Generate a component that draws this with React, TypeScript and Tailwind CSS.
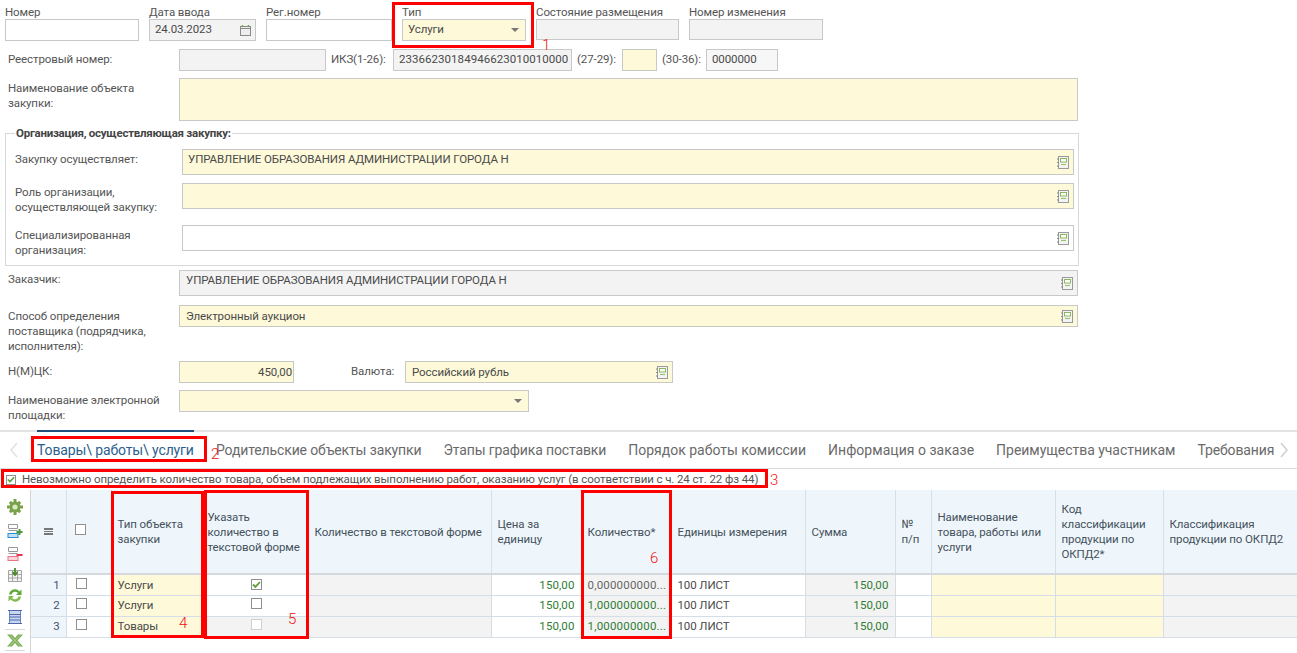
import React from 'react';

const YELLOW = 'bg-[#fdf9d9]';
const GRAY = 'bg-[#f3f3f3]';

const BookIcon = () => (
  <svg width="12" height="13" viewBox="0 0 12 13" className="shrink-0">
    <rect x="1.5" y="0.5" width="10" height="12" fill="#f4f4f4" stroke="#9a9a9a" />
    <rect x="3.5" y="2.5" width="6" height="3.5" fill="#fff" stroke="#8cb85c" />
    <path d="M4 8.5h5" stroke="#9cc46c" strokeWidth="1.2" />
    <path d="M0 3h2M0 6.5h2M0 10h2" stroke="#888" />
  </svg>
);

const Caret = () => <span className="ml-auto mr-[1px] w-0 h-0 border-x-[4px] border-x-transparent border-t-[4px] border-t-[#777]" />;

const Box = ({ className = '', children }: { className?: string; children?: React.ReactNode }) => (
  <div className={`border border-[#c8c8c8] shrink-0 flex text-[#4a4a4a] ${className}`}>{children}</div>
);

const TopField = ({ label, width, children, className = '' }: { label: string; width: string; children?: React.ReactNode; className?: string }) => (
  <div className={`shrink-0 ${width}`}>
    <div className="h-[14px] leading-[14px] text-[#555]">{label}</div>
    <Box className={`h-[22px] items-center px-[5px] ${className}`}>{children}</Box>
  </div>
);

const Label = ({ children, className = '' }: { children: React.ReactNode; className?: string }) => (
  <div className={`text-[#555] leading-[15px] shrink-0 ${className}`}>{children}</div>
);

const Check = ({ checked = false, disabled = false, small = false }: { checked?: boolean; disabled?: boolean; small?: boolean }) => (
  <span className={`inline-flex items-center justify-center border bg-white ${small ? 'w-[10px] h-[10px]' : 'w-[11px] h-[11px]'} ${disabled ? 'border-[#d0d0d0]' : 'border-[#8f8f8f]'}`}>
    {checked && (
      <svg width="9" height="9" viewBox="0 0 9 9">
        <path d="M1 4.5l2.4 2.4L8 2" fill="none" stroke="#5e9e38" strokeWidth="1.8" />
      </svg>
    )}
  </span>
);

const Red = ({ className }: { className: string }) => <div className={`absolute border-[3px] border-[#ff0000] pointer-events-none ${className}`} />;
const Num = ({ className, children }: { className: string; children: React.ReactNode }) => (
  <span className={`absolute text-[#f01010] text-[15px] leading-none font-light tracking-normal ${className}`}>{children}</span>
);

const ToolIcons = () => (
  <div className="w-[31px] shrink-0 border-r border-[#d5d5d5] flex flex-col items-center pt-[9px] h-[163px]">
    <svg width="16" height="16" viewBox="0 0 16 16" className="mb-[9px]">
      <g fill="#7aa24a">
        <circle cx="8" cy="8" r="5.5" />
        <path d="M6.5 0h3v3h-3zM6.500 13h3v3h-3zM0 6.500h3v3H0zM13 6.500h3v3h-3z" />
        <path d="M1.800 3.900l2.100-2.100 2.100 2.100-2.100 2.100zM10 12.100l2.100-2.100 2.100 2.100-2.100 2.100zM1.800 12.100L3.900 10 6 12.100l-2.100 2.100zM10 3.900l2.100-2.100 2.100 2.100L12.100 6z" />
      </g>
      <circle cx="8" cy="8" r="2.600" fill="#d9e8c5" />
    </svg>
    <svg width="16" height="15" viewBox="0 0 16 15" className="mb-[8px]">
      <path d="M1.500.5h9v4h-9zM1.500 6.500h9" fill="#fff" stroke="#999" />
      <rect x="1" y="9.500" width="10" height="4" fill="#bfe0f5" stroke="#2f8ecf" />
      <path d="M12.500 5v6M9.500 8h6" stroke="#4a9a3c" strokeWidth="2" />
    </svg>
    <svg width="16" height="15" viewBox="0 0 16 15" className="mb-[6px]">
      <path d="M1.500.5h9v4h-9zM1.500 6.500h9" fill="#fff" stroke="#999" />
      <rect x="1" y="9.500" width="10" height="4" fill="#fbd5da" stroke="#e77485" />
      <path d="M9.500 8h6" stroke="#e8354f" strokeWidth="2" />
    </svg>
    <svg width="14" height="14" viewBox="0 0 14 14" className="mb-[6px]">
      <path d="M.5 2.500h13v11H.5zM.5 6.500h13M.5 10h13M4.500 2.500v11M9.500 2.500v11" fill="#f5f5f5" stroke="#a5a5a5" />
      <path d="M7 0v6M4.500 4L7 7l2.500-3" fill="none" stroke="#4c8a2e" strokeWidth="1.800" />
    </svg>
    <svg width="16" height="15" viewBox="0 0 16 15" className="mb-[6px]">
      <path d="M2 6.500A6 6 0 0 1 12.500 3.500L14.500 1.500V7h-5.500l2-2A3.800 3.800 0 0 0 4.500 6.500z" fill="#5fa83a" />
      <path d="M14 8.500A6 6 0 0 1 3.500 11.500L1.500 13.500V8h5.500l-2 2a3.800 3.800 0 0 0 6.500-1.500z" fill="#84bb52" />
    </svg>
    <svg width="14" height="16" viewBox="0 0 14 16">
      <rect x="1.500" y="1.500" width="11" height="13" fill="#c8d6f0" stroke="#6f86c4" />
      <path d="M0 1.500h14M0 14.500h14M1.500 5.500h11M1.500 8h11M1.500 11h11" stroke="#4f68b0" />
    </svg>
    <div className="w-[20px] h-px bg-[#d8d8d8] mt-[4px] mb-[4px]" />
    <svg width="18" height="13" viewBox="0 0 18 13">
      <path d="M1 .5h5l3 3.500 3-3.500h5l-5.500 6 5.500 6h-5l-3-3.500-3 3.500H1l5.500-6z" fill="#7cae58" />
      <path d="M4 1.500l5 5 5 5M14 1.500l-5 5-5 5" stroke="#b7d69c" fill="none" />
    </svg>
    <div className="w-[20px] h-px bg-[#d8d8d8] mt-[3px]" />
  </div>
);

const columns = [35, 45, 93, 104, 183, 90, 90, 134, 90, 36, 124, 108, 134];
const th = 'border-r border-[#d5e0e8] px-[6px] pt-[1px] font-normal text-left text-[#44515c] leading-[15px] align-middle bg-[#eff6fb]';
const td = 'border-r border-b border-[#d5dde6] px-[6px] pt-[1px] h-[21px] whitespace-nowrap';
const DARK = 'text-[#4a4a4a]';
const money = 'text-right text-[#2f7d33] tracking-[0.1px]';

const rows = [
  { n: 1, type: 'Услуги', qty: '0,000000000...', qtyCls: 'text-[#666]', check: <Check checked />, checkBg: 'bg-white' },
  { n: 2, type: 'Услуги', qty: '1,000000000...', qtyCls: 'text-[#2f7d33]', check: <Check />, checkBg: 'bg-white' },
  { n: 3, type: 'Товары', qty: '1,000000000...', qtyCls: 'text-[#2f7d33]', check: <Check disabled />, checkBg: GRAY },
];

const tabs = [
  { title: 'Родительские объекты закупки', cls: '' },
  { title: 'Этапы графика поставки', cls: '' },
  { title: 'Порядок работы комиссии', cls: 'tracking-[0px]' },
  { title: 'Информация о заказе', cls: 'tracking-[0.03px]' },
  { title: 'Преимущества участникам', cls: 'tracking-[-0.04px]' },
  { title: 'Требования', cls: '' },
];

export default function App() {
  return (
    <div className="relative w-[1297px] h-[653px] overflow-hidden bg-white text-[11.5px] font-['Roboto','Open_Sans',sans-serif] tracking-[-0.1px]">
      <div className="flex pl-[5px] pt-[5px] gap-[10px]">
        <TopField label="Номер" width="w-[134px]" />
        <TopField label="Дата ввода" width="w-[107px]" className={GRAY}>
          24.03.2023
          <svg width="11" height="11" viewBox="0 0 11 11" className="ml-auto mr-[-1px]">
            <rect x="0.500" y="1.500" width="10" height="9" fill="#eee" stroke="#8a8a8a" />
            <path d="M1 3.500h9" stroke="#8a8a8a" />
            <path d="M2.500 0v2M8.500 0v2" stroke="#6fa24a" strokeWidth="1.400" />
          </svg>
        </TopField>
        <TopField label="Рег.номер" width="w-[126px]" />
        <TopField label="Тип" width="w-[124px]" className={YELLOW}>
          Услуги
          <Caret />
        </TopField>
        <div className="w-[143px] shrink-0">
          <div className="h-[14px] leading-[14px] text-[#555]">Состояние размещения</div>
          <Box className={`h-[21px] ${GRAY}`} />
        </div>
        <div className="w-[134px] shrink-0">
          <div className="h-[14px] leading-[14px] text-[#555]">Номер изменения</div>
          <Box className={`h-[21px] ${GRAY}`} />
        </div>
      </div>

      <div className="flex items-center pl-[8px] mt-[8px]">
        <Label className="w-[171px] mt-[-2px]">Реестровый номер:</Label>
        <Box className={`w-[147px] h-[22px] ${GRAY}`} />
        <Label className="ml-[5px] w-[62px] mt-[-2px]">ИКЗ(1-26):</Label>
        <Box className={`w-[179px] h-[22px] items-center pl-[5px] tracking-[0.05px] ${GRAY}`}>23366230184946623010010000</Box>
        <Label className="ml-[5px] w-[45px] mt-[-2px]">(27-29):</Label>
        <Box className={`w-[35px] h-[22px] ${YELLOW}`} />
        <Label className="ml-[5px] w-[44px] mt-[-2px]">(30-36):</Label>
        <Box className="w-[72px] h-[22px] items-center pl-[5px] bg-[#f7f7f7]">0000000</Box>
      </div>

      <div className="flex pl-[8px] mt-[7px]">
        <Label className="w-[171px] pt-[3px]">Наименование объекта<br />закупки:</Label>
        <Box className={`w-[899px] h-[43px] ${YELLOW}`} />
      </div>

      <fieldset className="ml-[5px] mt-[5px] w-[1074px] h-[140px] border border-[#d8d8d8] pl-[9px] pr-[3px] pb-0 min-w-0">
        <legend className="ml-[0px] px-[1px] font-bold text-[#444] leading-[14px] tracking-[-0.25px]">Организация, осуществляющая закупку:</legend>
        <div className="flex mt-[9px]">
          <Label className="w-[167px] pt-[3px]">Закупку осуществляет:</Label>
          <Box className={`w-[892px] h-[26px] pl-[5px] pr-[4px] items-start ${YELLOW}`}>
            <span className="mt-[1px]">УПРАВЛЕНИЕ ОБРАЗОВАНИЯ АДМИНИСТРАЦИИ ГОРОДА Н</span>
            <span className="ml-auto mt-[6px]"><BookIcon /></span>
          </Box>
        </div>
        <div className="flex mt-[8px]">
          <Label className="w-[167px] pt-[2px]">Роль организации,<br />осуществляющей закупку:</Label>
          <Box className={`w-[892px] h-[26px] pr-[4px] items-center justify-end ${YELLOW}`}><BookIcon /></Box>
        </div>
        <div className="flex mt-[10px]">
          <Label className="w-[167px] pt-[3px]">Специализированная<br />организация:</Label>
          <Box className="w-[892px] h-[26px] pr-[4px] items-center justify-end"><BookIcon /></Box>
        </div>
      </fieldset>

      <div className="flex pl-[8px] mt-[4px]">
        <Label className="w-[171px] pt-[2px]">Заказчик:</Label>
        <Box className={`w-[899px] h-[26px] pl-[6px] pr-[4px] items-start ${GRAY}`}>
          <span className="mt-[1px]">УПРАВЛЕНИЕ ОБРАЗОВАНИЯ АДМИНИСТРАЦИИ ГОРОДА Н</span>
          <span className="ml-auto mt-[6px]"><BookIcon /></span>
        </Box>
      </div>

      <div className="flex pl-[8px] mt-[9px]">
        <Label className="w-[171px] pt-[4px]">Способ определения<br />поставщика (подрядчика,<br />исполнителя):</Label>
        <Box className={`w-[899px] h-[22px] pl-[6px] pr-[4px] pt-[1px] items-center ${YELLOW}`}>
          Электронный аукцион
          <span className="ml-auto"><BookIcon /></span>
        </Box>
      </div>

      <div className="flex items-center pl-[8px] mt-[7px]">
        <Label className="w-[171px] mt-[-2px]">Н(М)ЦК:</Label>
        <Box className={`w-[115px] h-[22px] items-center justify-end pr-[1px] pt-[2px] ${YELLOW}`}>450,00</Box>
        <Label className="w-[111px] pl-[57px] mt-[-1px]">Валюта:</Label>
        <Box className={`w-[268px] h-[22px] pl-[6px] pr-[4px] pt-[1px] items-center ${YELLOW}`}>
          Российский рубль
          <span className="ml-auto"><BookIcon /></span>
        </Box>
      </div>

      <div className="flex pl-[8px] mt-[7px]">
        <Label className="w-[171px] pt-[3px]">Наименование электронной<br />площадки:</Label>
        <Box className="w-[350px] h-[22px] pr-[5px] items-center bg-[#fdf9d9]"><Caret /></Box>
      </div>

      <div className="flex mt-[7px] h-[2px] bg-[#e3e3e3]">
        <div className="ml-[37px] w-[157px] bg-[#1f4e7a]" />
      </div>

      <div className="flex items-center h-[37px] border-b border-[#dcdcdc] text-[14px] tracking-[-0.13px] text-[#6a6a6a] overflow-hidden">
        <svg width="10" height="16" viewBox="0 0 10 16" className="ml-[9px] mr-[18px] shrink-0">
          <path d="M8 1L2 8l6 7" fill="none" stroke="#e2e2e2" strokeWidth="1.500" />
        </svg>
        <span className="text-[#2b5f8f] w-[179px] shrink-0 whitespace-nowrap">Товары\ работы\ услуги</span>
        <div className="w-[1058px] shrink-0 flex gap-[22px] whitespace-nowrap">
          {tabs.map(t => <span key={t.title} className={`shrink-0 ${t.cls}`}>{t.title}</span>)}
        </div>
        <svg width="10" height="16" viewBox="0 0 10 16" className="ml-[5px] shrink-0">
          <path d="M2 1l6 7-6 7" fill="none" stroke="#cfcfcf" strokeWidth="1.500" />
        </svg>
      </div>

      <div className="flex items-center h-[21px] pl-[6px] gap-[6px] text-[#555] whitespace-nowrap">
        <Check checked small />
        <span>Невозможно определить количество товара, объем подлежащих выполнению работ, оказанию услуг (в соответствии с ч. 24 ст. 22 фз 44)</span>
      </div>

      <div className="flex">
        <ToolIcons />
        <table className="table-fixed border-collapse w-[1266px] self-start">
          <colgroup>
            {columns.map((w, i) => <col key={i} style={{ width: w }} />)}
          </colgroup>
          <thead>
            <tr className="h-[84px] border-b-[2px] border-[#d3d9de]">
              <th className="border-r border-[#d5e0e8] bg-[#eff6fb] text-center">
                <span className="inline-block w-[9px] h-[7px] border-y-[2px] border-[#777] relative align-middle">
                  <span className="absolute left-0 right-0 top-[1px] h-[1px] bg-[#777]" />
                </span>
              </th>
              <th className="border-r border-[#d5e0e8] bg-[#eff6fb] pl-[8px] text-left"><Check /></th>
              <th className={th}>Тип объекта<br />закупки</th>
              <th className={`${th} !px-[3px]`}>Указать<br />количество в<br />текстовой форме</th>
              <th className={th}>Количество в текстовой форме</th>
              <th className={th}>Цена за<br />единицу</th>
              <th className={th}>Количество*</th>
              <th className={th}>Единицы измерения</th>
              <th className={th}>Сумма</th>
              <th className={th}>№<br />п/п</th>
              <th className={th}>Наименование<br />товара, работы или<br />услуги</th>
              <th className={th}>Код<br />классификации<br />продукции по<br />ОКПД2*</th>
              <th className={`${th} border-r-0`}>Классификация<br />продукции по ОКПД2</th>
            </tr>
          </thead>
          <tbody>
            {rows.map(r => (
              <tr key={r.n}>
                <td className={`${td} text-right bg-[#eff6fb] !pr-[6px] text-[#46506e]`}>{r.n}</td>
                <td className={`${td} bg-white !pl-[9px]`}><Check /></td>
                <td className={`${td} ${DARK} ${YELLOW}`}>{r.type}</td>
                <td className={`${td} ${r.checkBg} text-center`}>{r.check}</td>
                <td className={`${td} ${GRAY}`} />
                <td className={`${td} ${money}`}>150,00</td>
                <td className={`${td} ${GRAY} ${r.qtyCls} tracking-[0.2px]`}>{r.qty}</td>
                <td className={`${td} ${DARK}`}>100 ЛИСТ</td>
                <td className={`${td} ${GRAY} ${money}`}>150,00</td>
                <td className={td} />
                <td className={`${td} ${YELLOW}`} />
                <td className={`${td} ${YELLOW}`} />
                <td className={`${td} ${GRAY} border-r-0`} />
              </tr>
            ))}
          </tbody>
        </table>
      </div>

      {/* annotation frames on top of the form */}
      <Red className="left-[392px] top-[2px] w-[142px] h-[46px]" />
      <Num className="left-[542px] top-[38px]">1</Num>
      <Red className="left-[31px] top-[436px] w-[176px] h-[26px]" />
      <Num className="left-[211px] top-[447px]">2</Num>
      <Red className="left-[1px] top-[469px] w-[767px] h-[19px]" />
      <Num className="left-[770px] top-[473px]">3</Num>
      <Red className="left-[111px] top-[491px] w-[93px] h-[147px]" />
      <Num className="left-[179px] top-[616px]">4</Num>
      <Red className="left-[204px] top-[490px] w-[105px] h-[149px]" />
      <Num className="left-[288px] top-[612px]">5</Num>
      <Red className="left-[581px] top-[490px] w-[91px] h-[149px]" />
      <Num className="left-[650px] top-[551px]">6</Num>
    </div>
  );
}
